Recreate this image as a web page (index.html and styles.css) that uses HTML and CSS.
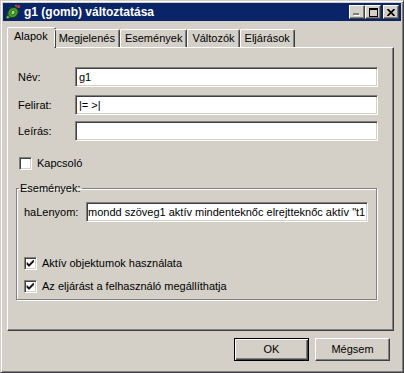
FILE: index.html
```html
<!DOCTYPE html>
<html>

<head>
    <meta charset="utf-8">
    <link rel="stylesheet" href="styles.css">
</head>

<body>
    <div class="window">
        <div class="titlebar">
            <svg class="app-icon" width="16" height="16" viewBox="0 0 16 16">
                <path d="M1.5 9.5l2 1M4 14.5l1-2M10.5 12.5l1 1.5M5.5 4.5l-1-1.5" stroke="#1d3d12" stroke-width="1.4"/>
                <ellipse cx="8" cy="8.6" rx="5.6" ry="4.8" transform="rotate(-40 8 8.6)" fill="#3f9c2f" stroke="#1d3d12" stroke-width="1"/>
                <path d="M6 8l2-2 2 1 0 2-2 2-2-1z" fill="#9ad86a" stroke="#1d3d12" stroke-width="0.6"/>
                <circle cx="2.8" cy="13.2" r="1.6" fill="#7cc45a" stroke="#1d3d12" stroke-width="0.7"/>
                <path d="M11 4l2-2" stroke="#2b5a1c" stroke-width="1"/>
                <circle cx="13.6" cy="2.4" r="1.5" fill="#e03a3a"/>
                <circle cx="11" cy="1.6" r="0.9" fill="#e86a6a"/>
            </svg>
            <span class="title">g1 (gomb) változtatása</span>
            <div class="caption">
                <span class="cap-btn">
                    <svg width="8" height="8" viewBox="0 0 8 8"><rect x="0" y="5" width="6" height="2" fill="#808080"/><rect x="1" y="7" width="6" height="1" fill="#fff"/></svg>
                </span>
                <span class="cap-btn">
                    <svg width="9" height="9" viewBox="0 0 9 9"><rect x="0.5" y="0.5" width="8" height="8" fill="none" stroke="#000"/><rect x="0" y="1" width="9" height="1" fill="#000"/></svg>
                </span>
                <span class="cap-btn close">
                    <svg width="8" height="7" viewBox="0 0 8 7"><path d="M0.5 0l7 7M7.5 0l-7 7" stroke="#000" stroke-width="1.7"/></svg>
                </span>
            </div>
        </div>

        <div class="dialog">
            <ul class="tabs">
                <li class="tab active">Alapok</li>
                <li class="tab">Megjelenés</li>
                <li class="tab">Események</li>
                <li class="tab">Változók</li>
                <li class="tab">Eljárások</li>
            </ul>

            <div class="panel">
                <div class="field name-row">
                    <label>Név:</label>
                    <div class="input">g1</div>
                </div>
                <div class="field caption-row">
                    <label>Felirat:</label>
                    <div class="input">|= &gt;|</div>
                </div>
                <div class="field">
                    <label>Leírás:</label>
                    <div class="input"></div>
                </div>

                <div class="check switch-row">
                    <span class="box"></span>
                    <span>Kapcsoló</span>
                </div>

                <fieldset class="group">
                    <legend>Események:</legend>
                    <div class="field event-row">
                        <label>haLenyom:</label>
                        <div class="input code">mondd szöveg1 aktív mindenteknőc elrejtteknőc aktív "t1</div>
                    </div>
                    <div class="check">
                        <span class="box"><svg width="9" height="9" viewBox="0 0 9 9"><path d="M1 3.5l2 2 4.5-4.5v2l-4.5 4.5-2-2z" fill="#000" stroke="#000" stroke-width="0.6"/></svg></span>
                        <span>Aktív objektumok használata</span>
                    </div>
                    <div class="check stop-row">
                        <span class="box"><svg width="9" height="9" viewBox="0 0 9 9"><path d="M1 3.5l2 2 4.5-4.5v2l-4.5 4.5-2-2z" fill="#000" stroke="#000" stroke-width="0.6"/></svg></span>
                        <span>Az eljárást a felhasználó megállíthatja</span>
                    </div>
                </fieldset>
            </div>

            <div class="actions">
                <button class="btn default">OK</button>
                <button class="btn">Mégsem</button>
            </div>
        </div>
    </div>
</body>

</html>
```

FILE: styles.css
```css
/* classic dialog look */

* {
    box-sizing: border-box;
}

body {
    margin: 0;
    background: #d4d0c8;
    font-family: "Liberation Sans", Arial, sans-serif;
    font-size: 11px;
    line-height: 13px;
    color: #000;
}

/* outer frame of the window */
.window {
    width: 404px;
    height: 373px;
    border: 1px solid;
    border-color: #d4d0c8 #404040 #404040 #d4d0c8;
    box-shadow: inset 1px 1px #fff, inset -1px -1px #808080;
    padding: 2px;
    display: flex;
    flex-direction: column;
}

.titlebar {
    height: 18px;
    background: #0a246a;
    color: #fff;
    display: flex;
    align-items: center;
    padding: 0 2px;
    gap: 3px;
    font-weight: bold;
    font-size: 12px;
}

.app-icon {
    flex: none;
}

.caption {
    margin-left: auto;
    display: flex;
}

.cap-btn {
    width: 16px;
    height: 14px;
    background: #d4d0c8;
    border: 1px solid;
    border-color: #fff #404040 #404040 #fff;
    box-shadow: inset -1px -1px #808080;
    display: flex;
    align-items: center;
    justify-content: center;
}

.cap-btn.close {
    margin-left: 2px;
}

/* body of the dialog */
.dialog {
    flex: 1;
    padding: 6px 7px 0 4px;
    display: flex;
    flex-direction: column;
}

.tabs {
    display: flex;
    align-items: flex-end;
    height: 20px;
    margin: 0;
    padding: 0 0 0 2px;
    list-style: none;
    position: relative;
    z-index: 1;
}

.tab {
    height: 18px;
    padding: 2px 4px 0 4px;
    line-height: 13px;
    border-left: 1px solid #fff;
    border-top: 1px solid #fff;
    border-right: 1px solid #404040;
    box-shadow: inset -1px 0 #808080;
    border-radius: 2px 2px 0 0;
}

.tab.active {
    height: 21px;
    margin: 0 -2px -1px;
    padding: 2px 7px 0 6px;
    background: #d4d0c8;
}

.panel {
    height: 284px;
    border: 1px solid;
    border-color: #fff #404040 #404040 #fff;
    box-shadow: inset -1px -1px #808080;
    padding: 19px 15px 0 8px;
}

/* label + edit box rows */
.field {
    display: grid;
    grid-template-columns: 57px 1fr;
    align-items: center;
    padding-left: 2px;
}

.name-row {
    margin-bottom: 8px;
}

.caption-row {
    margin-bottom: 6px;
}

.input {
    height: 20px;
    background: #fff;
    border: 1px solid;
    border-color: #808080 #fff #fff #808080;
    box-shadow: inset 1px 1px #404040, inset -1px -1px #d4d0c8;
    padding: 0 3px;
    line-height: 18px;
    white-space: nowrap;
    overflow: hidden;
}

.input.code {
    padding: 0 1px;
}

/* checkboxes */
.check {
    display: flex;
    align-items: center;
    gap: 5px;
    height: 13px;
    padding-left: 3px;
}

.switch-row {
    margin-top: 16px;
}

.box {
    width: 13px;
    height: 13px;
    background: #fff;
    border: 1px solid;
    border-color: #808080 #fff #fff #808080;
    box-shadow: inset 1px 1px #404040, inset -1px -1px #d4d0c8;
    display: flex;
    align-items: center;
    justify-content: center;
}

/* Események group box */
.group {
    margin: 12px 1px 0 0;
    padding: 0 8px 6px 7px;
    border: 1px solid #808080;
    box-shadow: inset 1px 1px #fff, 1px 1px #fff;
}

.group legend {
    padding: 0 1px;
    margin-left: -5px;
    line-height: 13px;
}

.event-row {
    grid-template-columns: 62px 1fr;
    padding-left: 0;
    margin-top: 7px;
    margin-bottom: 35px;
}

.group .check {
    padding-left: 0;
}

.stop-row {
    margin-top: 10px;
}

/* OK / Mégsem */
.actions {
    display: flex;
    justify-content: flex-end;
    gap: 6px;
    margin-top: 7px;
    padding-right: 4px;
}

.btn {
    width: 75px;
    height: 23px;
    font: inherit;
    color: #000;
    background: #d4d0c8;
    border: 1px solid;
    border-color: #fff #404040 #404040 #fff;
    box-shadow: inset -1px -1px #808080;
    padding: 0;
}

.btn.default {
    border-color: #000;
    box-shadow: inset 1px 1px #fff, inset -1px -1px #404040, inset -2px -2px #808080;
}
```
